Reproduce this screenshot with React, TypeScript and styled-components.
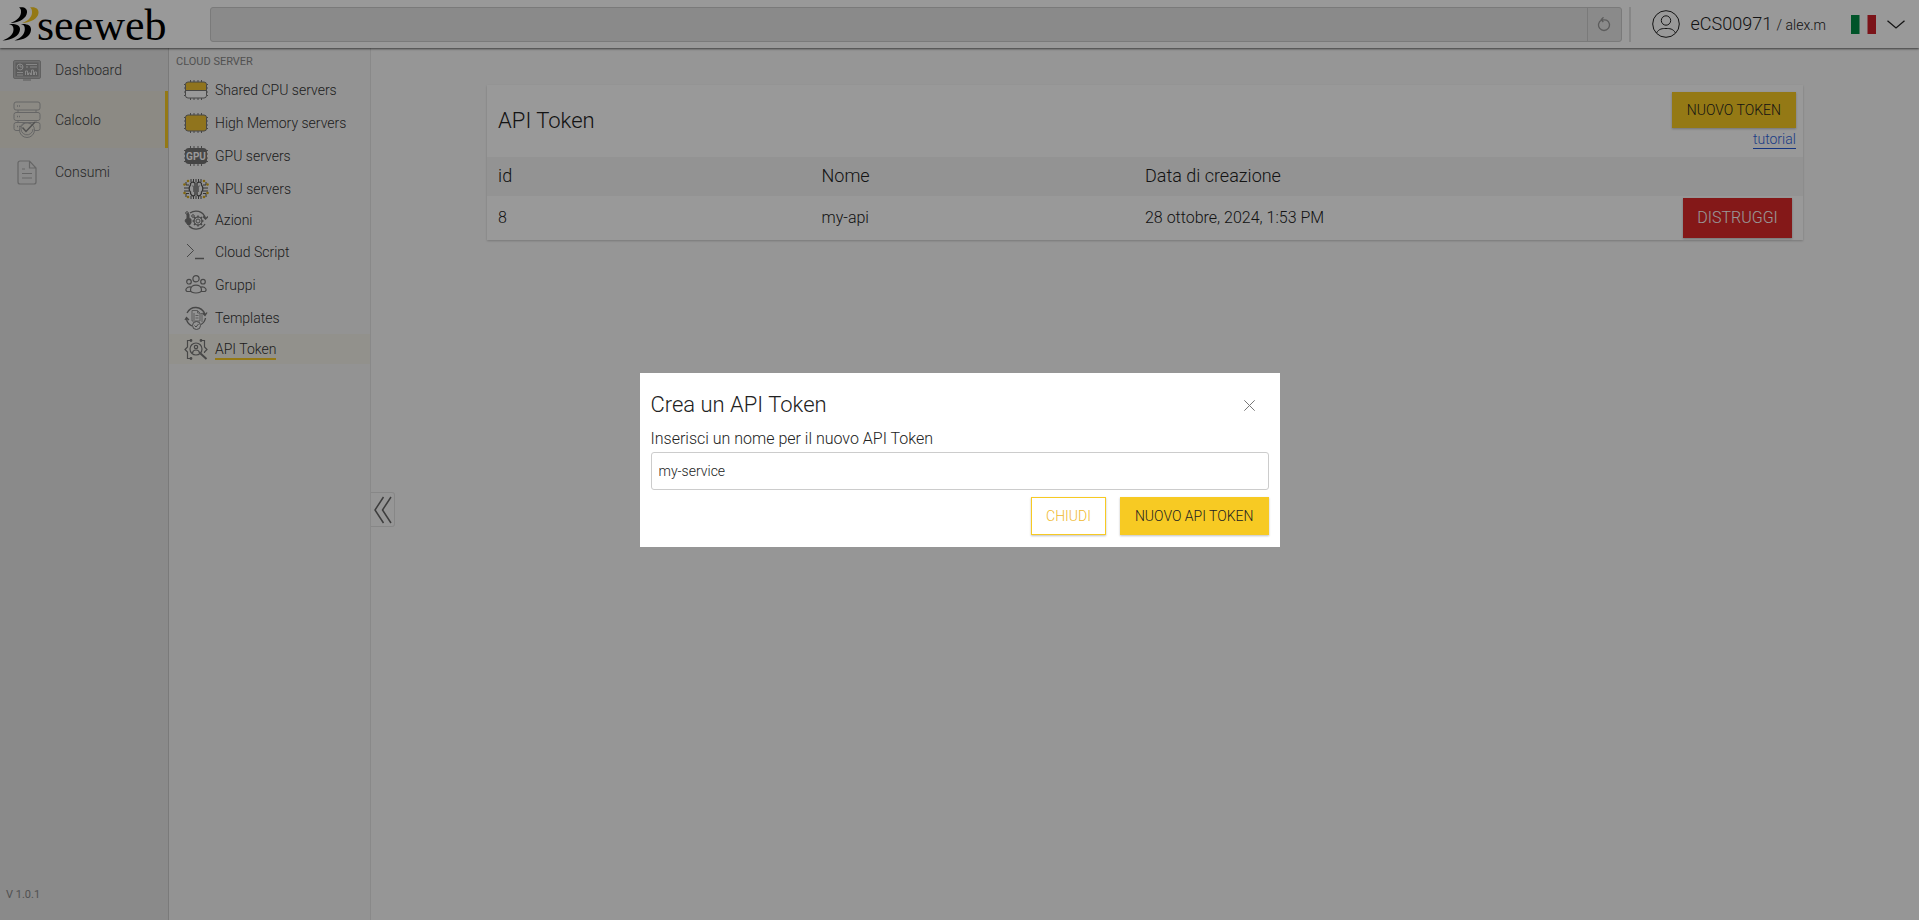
import React from 'react';
import styled, { createGlobalStyle } from 'styled-components';

const GlobalStyle = createGlobalStyle`
  * { box-sizing: border-box; }
  body {
    margin: 0;
    font-family: Roboto, 'Liberation Sans', sans-serif;
    font-weight: 300;
    color: #222;
    background: #fafafa;
  }
  button, input { font: inherit; color: inherit; }
  svg { display: block; flex: none; }
`;

const Page = styled.div`
  display: flex;
  flex-direction: column;
  min-height: 100vh;
`;

const Header = styled.header`
  display: flex;
  align-items: center;
  height: 48px;
  padding-right: 14px;
  background: #fff;
  box-shadow: 0 1px 2px rgba(0, 0, 0, 0.6);
  z-index: 1;
`;

const LogoLink = styled.a`
  width: 210px;
  flex: none;
`;

const SearchBar = styled.form`
  display: flex;
  flex: 1;
  height: 35px;
  border: 1px solid #cbcbcb;
  border-radius: 3px;
  background: #e6e6e6;
`;

const SearchInput = styled.input`
  flex: 1;
  min-width: 0;
  border: 0;
  background: transparent;
  outline: none;
  padding: 0 12px;
`;

const ReloadButton = styled.button`
  display: flex;
  align-items: center;
  justify-content: center;
  width: 34px;
  padding: 0;
  border: 0;
  border-left: 1px solid #cbcbcb;
  background: transparent;
  color: #999;
`;

const Divider = styled.span`
  width: 2px;
  height: 35px;
  margin: 0 21px 0 7px;
  background: #e0e0e0;
`;

const UserButton = styled.button`
  display: flex;
  align-items: center;
  padding: 0;
  border: 0;
  background: transparent;
`;

const UserName = styled.span`
  margin-left: 11px;
  font-size: 18px;
  line-height: 24px;
  white-space: nowrap;

  small { font-size: 14px; }
`;

const LanguageButton = styled.button`
  display: flex;
  align-items: center;
  gap: 11px;
  margin-left: 25px;
  padding: 0;
  border: 0;
  background: transparent;
`;

const Body = styled.div`
  display: flex;
  flex: 1;
`;

const Sidebar = styled.nav`
  display: flex;
  flex-direction: column;
  width: 169px;
  flex: none;
  padding-top: 1px;
  background: #e6e6e6;
  border-right: 1px solid #ccc;
`;

const SidebarLink = styled.a<{ $height: number; $active?: boolean }>`
  display: grid;
  grid-template-columns: 28px 1fr;
  align-items: center;
  gap: 14px;
  height: ${p => p.$height}px;
  padding-left: 13px;
  border-right: 3px solid ${p => (p.$active ? '#f7ca23' : 'transparent')};
  background: ${p => (p.$active ? '#e9e6dc' : 'transparent')};
  color: #444;
  font-size: 14px;
  text-decoration: none;
`;

const IconSlot = styled.span<{ $color?: string }>`
  display: flex;
  justify-content: center;
  color: ${p => p.$color || '#aaa'};
`;

const Version = styled.span`
  margin-top: auto;
  padding: 0 6px 17px;
  color: #888;
  font-size: 11px;
  font-weight: 400;
  line-height: 16px;
`;

const SubMenu = styled.nav`
  width: 202px;
  flex: none;
  background: #f5f5f5;
  border-right: 1px solid #e4e4e4;
`;

const SubMenuTitle = styled.h2`
  height: 25px;
  margin: 0;
  padding: 6px 0 0 7px;
  color: #888;
  font-size: 11px;
  font-weight: 400;
  line-height: 16px;
`;

const SubMenuLink = styled.a<{ $compact?: boolean; $active?: boolean }>`
  display: grid;
  grid-template-columns: 24px auto;
  justify-content: start;
  align-items: center;
  gap: 7px;
  height: ${p => (p.$compact ? 30 : 33)}px;
  padding-left: 15px;
  background: ${p => (p.$active ? '#f4f2e9' : 'transparent')};
  color: #333;
  font-size: 14px;
  line-height: 18px;
  text-decoration: none;
`;

const SubMenuLabel = styled.span<{ $active?: boolean }>`
  border: solid transparent;
  border-width: 2px 0;
  border-bottom-color: ${p => (p.$active ? '#f7ca23' : 'transparent')};
`;

const Main = styled.main`
  display: flex;
  flex: 1;
  min-width: 0;
  position: relative;
  align-items: flex-start;
  justify-content: center;
  padding-top: 37px;
`;

const CollapseButton = styled.button`
  position: absolute;
  left: 0;
  top: 444px;
  display: flex;
  align-items: center;
  justify-content: center;
  width: 24px;
  height: 35px;
  padding: 0;
  border: 1px solid #e2e2e2;
  border-left: 0;
  border-radius: 0 3px 3px 0;
  background: transparent;
  color: #666;
`;

const Card = styled.section`
  width: 85%;
  background: #fff;
  box-shadow: 0 1px 2px rgba(0, 0, 0, 0.2);
`;

const CardHeader = styled.div`
  display: flex;
  justify-content: space-between;
  align-items: flex-start;
  padding: 7px 7px 7px 11px;
  height: 72px;
`;

const Title = styled.h1`
  margin: 0;
  align-self: center;
  font-size: 22px;
  font-weight: 300;
  line-height: 28px;
`;

const CardActions = styled.div`
  display: flex;
  flex-direction: column;
  align-items: flex-end;
`;

const Button = styled.button<{ $kind?: 'primary' | 'outline' | 'danger'; $height?: number }>`
  height: ${p => p.$height || 38}px;
  padding: 0 ${p => (p.$kind === 'danger' ? 13 : 14)}px;
  border: 1px solid ${p => (p.$kind === 'danger' ? '#dc2829' : '#f7ca23')};
  background: ${p => (p.$kind === 'danger' ? '#dc2829' : p.$kind === 'outline' ? '#fff' : '#f7ca23')};
  color: ${p => (p.$kind === 'danger' ? '#fff' : p.$kind === 'outline' ? '#efb92c' : '#222')};
  font-size: ${p => (p.$kind === 'danger' ? 16 : 14)}px;
  text-transform: uppercase;
  white-space: nowrap;
  box-shadow: 0 1px 2px rgba(0, 0, 0, 0.25);
`;

const TutorialLink = styled.a`
  margin-top: 2px;
  border-bottom: 1px solid #2459d8;
  color: #3065e0;
  font-size: 14px;
  line-height: 18px;
  text-decoration: none;
`;

const TokenTable = styled.table`
  display: block;
  width: 100%;

  thead, tbody { display: block; }
`;

const TokenRow = styled.tr<{ $head?: boolean }>`
  display: grid;
  grid-template-columns: repeat(4, 1fr);
  align-items: center;
  height: ${p => (p.$head ? 39 : 44)}px;
  padding: ${p => (p.$head ? '0 11px 2px' : '0 11px')};
  background: ${p => (p.$head ? '#f5f5f5' : '#fff')};
  font-size: ${p => (p.$head ? 18 : 16)}px;
  line-height: 24px;

  th { padding: 0; font-weight: 300; text-align: left; }
  td { padding: 0; }
  td:last-child { display: flex; justify-content: flex-end; }
`;

const Overlay = styled.div`
  position: fixed;
  inset: 0;
  z-index: 10;
  display: flex;
  align-items: center;
  justify-content: center;
  background: rgba(0, 0, 0, 0.4);
`;

const Dialog = styled.form`
  width: 640px;
  max-width: 100%;
  padding: 11px 11px 12px;
  background: #fff;
`;

const DialogHeader = styled.div`
  display: flex;
  align-items: center;
  justify-content: space-between;
  height: 42px;
  padding-right: 11px;
`;

const CloseButton = styled.button`
  display: flex;
  padding: 3px;
  border: 0;
  background: transparent;
  color: #777;
`;

const FieldLabel = styled.label`
  display: block;
  padding: 2px 0;
  font-size: 16px;
  line-height: 22px;
`;

const TextField = styled.input`
  display: block;
  width: 100%;
  height: 38px;
  padding: 0 7px;
  border: 1px solid #ccc;
  border-radius: 3px;
  background: #fff;
  outline: none;
  font-size: 14px;
`;

const DialogActions = styled.div`
  display: flex;
  justify-content: flex-end;
  gap: 14px;
  margin-top: 7px;
`;

const stroke = { fill: 'none', stroke: 'currentColor' };

const Logo = () => (
  <svg width="200" height="48" viewBox="0 0 200 48" overflow="visible" role="img" aria-label="seeweb">
    <path d="M19 7.500C24 6.500 27.500 8.500 27 12.500C26.500 18 20 22.500 10.500 23C17 20.500 20.500 17 21 12.500C21.200 9.500 20.500 8.500 19 7.500Z" fill="#000" />
    <path d="M30 7.500C35.500 6.500 39 9 38.500 13C38 18.500 31 22.500 22 23C28 21 31.500 17.500 32 13C32.200 10 31.500 8.500 30 7.500Z" fill="#f7ca23" />
    <path d="M9 24C15.500 23.500 20.500 25 20 29.500C19.500 36 12 40 2.500 40.500C9 38 13.500 34.500 13.500 29.500C13.500 26 12 25 9 24Z" fill="#000" />
    <path d="M21 24C27.500 23.500 31.500 25.500 31 30C30.500 36.500 24 40 14.500 40.500C21 38 24.500 34.500 24.800 29.500C24.900 26 24 25 21 24Z" fill="#000" />
    <text x="37" y="40" fontFamily="'Liberation Serif', serif" fontSize="44" fontWeight="400" fill="#000">seeweb</text>
  </svg>
);

const ReloadIcon = () => (
  <svg width="14" height="15" viewBox="0 0 14 15" {...stroke} strokeWidth="1.300">
    <path d="M4.500 3.100A5.500 5.500 0 1 0 9.500 3.100M9.500 3.100L4.500 2.600M6.500.3L4.300 2.600L6.300 5" />
  </svg>
);

const UserIcon = () => (
  <svg width="28" height="28" viewBox="0 0 28 28" {...stroke}>
    <circle cx="14" cy="14" r="13.300" />
    <circle cx="14" cy="10.500" r="4.700" />
    <path d="M4.500 23C7 18.500 10.500 18.500 14 18.500S21 18.500 23.500 23" />
  </svg>
);

const ItalianFlag = () => (
  <svg width="25" height="19" viewBox="0 0 25 19" role="img" aria-label="Italiano">
    <rect width="25" height="19" fill="#fff" />
    <rect width="8.500" height="19" fill="#008c45" />
    <rect x="16.500" width="8.500" height="19" fill="#cd212a" />
  </svg>
);

const ChevronIcon = () => (
  <svg width="18" height="9" viewBox="0 0 18 9" {...stroke} strokeWidth="1.300">
    <path d="M.5.700L9 8L17.500.700" />
  </svg>
);

const DashboardIcon = () => (
  <svg width="28" height="21" viewBox="0 0 28 21">
    <rect x=".5" y=".5" width="27" height="18" rx="1.500" fill="#b8b8b8" stroke="#a2a2a2" />
    <rect x="2.500" y="2.500" width="23" height="14" fill="#999" />
    <g fill="none" stroke="#e2e2e2">
      <circle cx="7" cy="7" r="3" /><path d="M7 4v3h3M13 4.500h11M13 7h2m2 0h7M4 12.500h6M4 15h6" />
      <path d="M12.500 15v-4h2v4m1 0v-2h2v2m1 0V10h2v5m1 0v-3h2v3" />
    </g>
    <path d="M10 19.500h8v1h-8z" fill="#999" />
  </svg>
);

const ComputeIcon = () => (
  <svg width="28" height="38" viewBox="0 0 28 38" {...stroke}>
    {[1, 11.5, 21.5].map(y => (
      <g key={y}>
        <rect x="1" y={y} width="26" height="8" rx="2" />
        <path d={`M4 ${y + 4}h1m1 0h1`} strokeWidth="1.500" />
      </g>
    ))}
    <path d="M5 9v2.500M23 9v2.500M5 19.500v2M23 19.500v2" />
    <circle cx="14" cy="29" r="7.500" fill="#e9e6dc" />
    <path d="M17.500 23A6 6 0 1 0 20 28" />
    <path d="M9.500 26.500l3.500 4L22 21" strokeWidth="1.500" stroke="#888" />
  </svg>
);

const DocumentIcon = () => (
  <svg width="20" height="25" viewBox="0 0 20 25" {...stroke} strokeWidth="1.200">
    <path d="M12.500 1H3A2 2 0 0 0 1 3V22A2 2 0 0 0 3 24H17A2 2 0 0 0 19 22V8ZM12.500 1V8H19M5 9h3M5 13.500h10M5 18h10" />
  </svg>
);

const ChipPins = () => (
  <path d="M6.500 0v20M10 0v20M14 0v20M17.500 0v20M0 4.500h24M0 8h24M0 12h24M0 15.500h24" stroke="#777" />
);

const SharedCpuIcon = () => (
  <svg width="24" height="20" viewBox="0 0 24 20">
    <ChipPins />
    <rect x="1.500" y="2" width="21" height="16" rx="2.500" fill="#fff" />
    <path d="M1.500 10V4.500A2.500 2.500 0 0 1 4 2H20A2.500 2.500 0 0 1 22.500 4.500V10Z" fill="#f1c231" />
    <path d="M1.500 10.500h21" stroke="#777" />
    <rect x="1.500" y="2" width="21" height="16" rx="2.500" fill="none" stroke="#777" />
  </svg>
);

const MemoryIcon = () => (
  <svg width="24" height="20" viewBox="0 0 24 20">
    <ChipPins />
    <rect x="1.500" y="2" width="21" height="16" rx="2.500" fill="#f1c231" stroke="#777" />
  </svg>
);

const GpuIcon = () => (
  <svg width="24" height="20" viewBox="0 0 24 20">
    <ChipPins />
    <rect x="1" y="2" width="22" height="16" rx="4" fill="#737373" />
    <text x="12" y="14" textAnchor="middle" fontFamily="Roboto, sans-serif" fontSize="10" fontWeight="700" fill="#fff">GPU</text>
  </svg>
);

const NpuIcon = () => (
  <svg width="26" height="20" viewBox="0 0 26 20" fill="none" stroke="#555">
    <path d="M8 0v3M10.500 0v3M13 0v3M15.500 0v3M18 0v3M8 17v3M10.500 17v3M13 17v3M15.500 17v3M18 17v3M6 6H3V3M6 9H1M6 12H1M6 14.500H3V18M20 6h3V3M20 9h5M20 12h5M20 14.500h3V18" />
    <path d="M12 4C9 2 7 4 7.500 6C5.500 8 6 12 7.500 13C7 16 10 18 12 16ZM14 4C17 2 19 4 18.500 6C20.500 8 20 12 18.500 13C19 16 16 18 14 16Z" strokeWidth="1.300" />
    <path d="M9 7h1.500v6M17 7h-1.500v6" stroke="#999" />
    <g fill="#d9ac1c" stroke="none">
      <circle cx="5" cy="2" r="1.300" /><circle cx="21" cy="2" r="1.300" />
      <circle cx="1.500" cy="5.500" r="1.300" /><circle cx="24.500" cy="5.500" r="1.300" />
      <circle cx="1.500" cy="14" r="1.300" /><circle cx="24.500" cy="14" r="1.300" />
      <circle cx="5" cy="18" r="1.300" /><circle cx="21" cy="18" r="1.300" />
    </g>
  </svg>
);

const ActionsIcon = () => (
  <svg width="24" height="20" viewBox="0 0 24 20" {...stroke}>
    <path d="M6 3C11-.5 19 .5 21.500 8.500M19 6.500l2.500 2.500L24 6.500M21 14C18 19.500 10 21 5 16" strokeWidth="1.300" />
    <path d="M2 9h1V4.500a1 1 0 0 1 2 0V8l2 1.200V13l-1.500 2H4L1 11Z" fill="currentColor" />
    <circle cx="3" cy="3" r="1.300" /><circle cx="9" cy="6" r="1.300" />
    <circle cx="14" cy="11" r="2" />
    <circle cx="14" cy="11" r="4" strokeWidth="1.200" />
    <path d="M14 5.500v2M14 14.500v2M8.500 11h2M17.500 11h2M10 7l1.500 1.500M16.500 13.500L18 15M18 7l-1.500 1.500M11.500 13.500L10 15" strokeWidth="1.500" />
  </svg>
);

const ScriptIcon = () => (
  <svg width="24" height="17" viewBox="0 0 24 17" {...stroke}>
    <path d="M3 1l6.500 6.500L3 14" /><path d="M11 15.500h9" strokeWidth="1.500" />
  </svg>
);

const GroupsIcon = () => (
  <svg width="22" height="19" viewBox="0 0 22 19" {...stroke} strokeWidth="1.200">
    <circle cx="11" cy="3.700" r="3.100" /><circle cx="4" cy="6.700" r="2.300" /><circle cx="18" cy="6.700" r="2.300" />
    <path d="M5.500 15C5.500 8.500 16.500 8.500 16.500 15C17 19 5 19 5.500 15ZM5.500 16.500H2C-.5 15 1.500 11.500 6 12M16.500 16.500H20C22.500 15 20.500 11.500 16 12" />
  </svg>
);

const TemplatesIcon = () => (
  <svg width="24" height="24" viewBox="0 0 24 24" {...stroke}>
    <path d="M3 7C7-.5 17-.5 21 8M18.500 7l2.500 2.500L23 6.500M1 14l1.500-2.500L5 14M2.500 12C2.500 16 5 18.500 8 20M21.500 12C21 15 19.500 17 17 18.500" strokeWidth="1.300" />
    <path d="M8 4.500h5.500L16 7v8H8ZM13.500 4.500V7H16M10 7v7M11.500 9.500h3M11.500 12h3M16.500 7.500H18V16" stroke="#999" />
    <circle cx="12.500" cy="19.500" r="4" fill="#f5f5f5" /><path d="M10.500 19.500l1.500 1.500 2.500-3" />
  </svg>
);

const ApiTokenIcon = () => (
  <svg width="24" height="21" viewBox="0 0 24 21" {...stroke} strokeWidth="1.200">
    <path d="M7.500 1.500H3.500V8L1 10.500L3.500 13V19.500H7.500M16.500 1.500H20.500V8L23 10.500L20.500 13V14" />
    <circle cx="7" cy="1.500" r=".8" /><circle cx="7" cy="19.500" r=".8" /><circle cx="17" cy="1.500" r=".8" />
    <circle cx="12" cy="10" r="6" /><circle cx="12" cy="8" r="1.700" />
    <path d="M8.500 14C9 10 15 10 15.500 14" /><path d="M16.500 14.500L22.500 20" strokeWidth="2" />
  </svg>
);

const CollapseIcon = () => (
  <svg width="18" height="28" viewBox="0 0 18 28" {...stroke} strokeWidth="1.500">
    <path d="M9.500 1L1 14L9.500 27M17 1L8.500 14L17 27" />
  </svg>
);

const CloseIcon = () => (
  <svg width="11" height="11" viewBox="0 0 11 11" {...stroke}>
    <path d="M.3.3l10.400 10.400M10.700.3L.3 10.700" />
  </svg>
);

const subMenuItems = [
  { label: 'Shared CPU servers', icon: <SharedCpuIcon /> },
  { label: 'High Memory servers', icon: <MemoryIcon /> },
  { label: 'GPU servers', icon: <GpuIcon /> },
  { label: 'NPU servers', icon: <NpuIcon /> },
  { label: 'Azioni', icon: <ActionsIcon />, compact: true },
  { label: 'Cloud Script', icon: <ScriptIcon /> },
  { label: 'Gruppi', icon: <GroupsIcon /> },
  { label: 'Templates', icon: <TemplatesIcon /> },
  { label: 'API Token', icon: <ApiTokenIcon />, compact: true, active: true },
];

const tokens = [{ id: 8, name: 'my-api', created: '28 ottobre, 2024, 1:53 PM' }];

export default function App() {
  return (
    <>
      <GlobalStyle />
      <Page>
        <Header>
          <LogoLink href="#"><Logo /></LogoLink>
          <SearchBar>
            <SearchInput type="search" aria-label="Cerca" />
            <ReloadButton type="button" aria-label="Ricarica"><ReloadIcon /></ReloadButton>
          </SearchBar>
          <Divider />
          <UserButton type="button">
            <UserIcon />
            <UserName>eCS00971 <small>/ alex.m</small></UserName>
          </UserButton>
          <LanguageButton type="button" aria-label="Lingua">
            <ItalianFlag />
            <ChevronIcon />
          </LanguageButton>
        </Header>
        <Body>
          <Sidebar>
            <SidebarLink href="#" $height={42}><IconSlot><DashboardIcon /></IconSlot>Dashboard</SidebarLink>
            <SidebarLink href="#" $height={57} $active><IconSlot><ComputeIcon /></IconSlot>Calcolo</SidebarLink>
            <SidebarLink href="#" $height={48}><IconSlot><DocumentIcon /></IconSlot>Consumi</SidebarLink>
            <Version>V 1.0.1</Version>
          </Sidebar>
          <SubMenu>
            <SubMenuTitle>CLOUD SERVER</SubMenuTitle>
            {subMenuItems.map(item => (
              <SubMenuLink key={item.label} href="#" $compact={item.compact} $active={item.active}>
                <IconSlot $color="#777">{item.icon}</IconSlot>
                <SubMenuLabel $active={item.active}>{item.label}</SubMenuLabel>
              </SubMenuLink>
            ))}
          </SubMenu>
          <Main>
            <CollapseButton type="button" aria-label="Comprimi menu"><CollapseIcon /></CollapseButton>
            <Card>
              <CardHeader>
                <Title>API Token</Title>
                <CardActions>
                  <Button type="button" $height={36}>Nuovo token</Button>
                  <TutorialLink href="#">tutorial</TutorialLink>
                </CardActions>
              </CardHeader>
              <TokenTable>
                <thead>
                  <TokenRow $head>
                    <th>id</th>
                    <th>Nome</th>
                    <th>Data di creazione</th>
                  </TokenRow>
                </thead>
                <tbody>
                  {tokens.map(token => (
                    <TokenRow key={token.id}>
                      <td>{token.id}</td>
                      <td>{token.name}</td>
                      <td>{token.created}</td>
                      <td><Button type="button" $kind="danger" $height={40}>Distruggi</Button></td>
                    </TokenRow>
                  ))}
                </tbody>
              </TokenTable>
            </Card>
          </Main>
        </Body>
      </Page>
      <Overlay>
        <Dialog role="dialog" aria-labelledby="dialog-title">
          <DialogHeader>
            <Title as="h2" id="dialog-title">Crea un API Token</Title>
            <CloseButton type="button" aria-label="Chiudi finestra"><CloseIcon /></CloseButton>
          </DialogHeader>
          <FieldLabel htmlFor="token-name">Inserisci un nome per il nuovo API Token</FieldLabel>
          <TextField id="token-name" type="text" defaultValue="my-service" />
          <DialogActions>
            <Button type="button" $kind="outline">Chiudi</Button>
            <Button type="button">Nuovo API Token</Button>
          </DialogActions>
        </Dialog>
      </Overlay>
    </>
  );
}
